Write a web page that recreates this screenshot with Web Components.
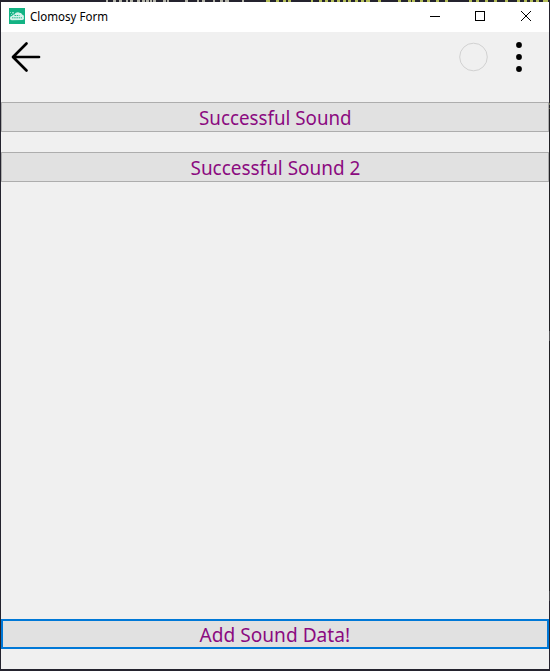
<!DOCTYPE html>
<html lang="en">
<head>
<meta charset="utf-8">
<title>Clomosy Form</title>
<style>
html, body { margin: 0; height: 100%; overflow: hidden; background: #24232e; }
</style>
</head>
<body>
<app-desktop>
  <app-window caption="Clomosy Form">
    <form-toolbar slot="toolbar"></form-toolbar>
    <form-button width="153">Successful Sound</form-button>
    <form-button width="170">Successful Sound 2</form-button>
    <form-button slot="footer" width="151" focused>Add Sound Data!</form-button>
  </app-window>
</app-desktop>
<script>
class Base extends HTMLElement {
  constructor() {
    super();
    this.attachShadow({ mode: 'open' }).innerHTML = this.constructor.html;
  }
}

// Scales its text horizontally to a given width.
customElements.define('fit-text', class extends Base {
  static html = `<style>
    :host { display: flex; justify-content: center; }
    span { display: block; white-space: nowrap; flex: none; transform-origin: var(--origin, center); }
  </style><span><slot></slot></span>`;
  static observedAttributes = ['width'];
  connectedCallback() { this.fit(); }
  attributeChangedCallback() { this.fit(); }
  fit() {
    const s = this.shadowRoot.querySelector('span');
    const w = s.offsetWidth, target = +this.getAttribute('width');
    if (w && target) s.style.transform = `scaleX(${target / w})`;
  }
});

customElements.define('app-desktop', class extends Base {
  static html = `<style>
    :host { display: grid; grid-template: 2px 667px 2px / 1px 548px 1px; width: 550px; height: 671px; background: #24232e; }
    svg { display: block; grid-area: 1 / 1 / 2 / 4; }
    .edge { grid-area: 2 / 3; background: linear-gradient(#25232e 0 101px, #73735b 101px 103px, #2a2931 103px 106px, #66664f 106px 107px, #202024 107px 329px, #555558 329px 339px, #202024 339px 589px, #48484c 589px 599px, #25232e 599px); }
    slot { display: block; grid-area: 2 / 2; }
  </style>
  <svg width="550" height="2" viewBox="0 0 550 2" fill="none" stroke-width="2">
    <path stroke="#b5b5aa" d="M106 1h2M113 1h3M119 1h3M126 1h2M130 1h3M137 1h3M142 1h3M146 1h3M150 1h2M153 1h3M163 1h3M167 1h2M185 1h3M197 1h2M202 1h3M213 1h2M220 1h3"/>
    <path stroke="#b5b5aa" d="M225 1h4M242 1h2"/>
    <path stroke="#b4bd58" d="M266 1h4M276 1h3M283 1h3M288 1h3M311 1h2M319 1h3M325 1h3M331 1h3M337 1h3M343 1h3M348 1h3M355 1h3M361 1h3M366 1h4M378 1h3M398 1h3M408 1h3M412 1h3M420 1h3M427 1h3M436 1h3M445 1h3M469 1h3M476 1h3M485 1h3M494 1h3M505 1h3M517 1h3M524 1h3M530 1h3M536 1h3M543 1h5"/>
  </svg><slot></slot><div class="edge"></div>`;
});

customElements.define('window-controls', class extends Base {
  static html = `<style>
    :host { display: flex; }
    svg { display: block; width: 46px; height: 30px; fill: none; stroke: #000; }
  </style>
  <svg viewBox="0 0 46 30"><path d="M19 14.5h10" shape-rendering="crispEdges"/></svg>
  <svg viewBox="0 0 46 30"><path d="M18.5 9.5h9v9h-9z" shape-rendering="crispEdges"/></svg>
  <svg viewBox="0 0 46 30"><path d="M18 9l10 10M28 9L18 19"/></svg>`;
});

customElements.define('app-logo', class extends Base {
  static html = `<style>:host { display: block; width: 16px; height: 16px; } svg { display: block; }</style>
  <svg width="16" height="16" viewBox="0 0 16 16">
    <path fill="#13b384" d="M0 0h16v16H0z"/>
    <path fill="#d5f4eb" d="M3 12.2C1.4 12.2.7 11 1.1 9.8 1 8.6 2 7.7 3.2 8 3.5 6.7 4.8 6.4 5.5 6.5 6.3 4.3 9.4 3.6 11 5c.9-.1 1.9.5 2 1.4 1.6.3 2.3 1.6 1.8 2.8.6 1.5-.2 2.8-1.6 2.8z"/>
    <path fill="none" stroke="#13b384" stroke-width=".9" stroke-dasharray="1.5 .7" d="M3 9.8h10M5.5 7.5h5"/>
    <path fill="#8bdcc5" d="M1 4h1v1H1zM3 4h2v1.5H3zM2 6h1v1H2z"/>
  </svg>`;
});

customElements.define('app-window', class extends Base {
  static html = `<style>
    :host { display: flex; flex-direction: column; height: 667px; background: #f0f0f0; }
    header { display: flex; height: 30px; background: #fff; padding-left: 8px; align-items: center; box-sizing: border-box; flex: none; }
    app-logo { margin-top: -2px; }
    fit-text { --origin: left; justify-content: flex-start; width: 78px; margin-left: 5px; font: 12px/16px "Noto Sans", sans-serif; color: #000; }
    window-controls { margin-left: auto; }
    main { display: flex; flex-direction: column; gap: 20px; padding-top: 20px; flex: 1; }
    footer { padding-bottom: 20px; }
  </style>
  <header><app-logo></app-logo><fit-text width="78"></fit-text><window-controls></window-controls></header>
  <slot name="toolbar"></slot>
  <main><slot></slot></main>
  <footer><slot name="footer"></slot></footer>`;
  connectedCallback() {
    const t = this.shadowRoot.querySelector('fit-text');
    t.textContent = this.getAttribute('caption');
    t.fit();
  }
});

customElements.define('form-toolbar', class extends Base {
  static html = `<style>
    :host { display: flex; height: 50px; flex: none; justify-content: space-between; }
    svg { display: block; }
  </style>
  <svg width="50" height="50" viewBox="0 0 50 50" fill="none" stroke="#000" stroke-width="2.7" stroke-linecap="round" stroke-linejoin="round"><path d="M38 25H12.5M25.5 11.5L12 25l13.5 13.5"/></svg>
  <svg width="98" height="50" viewBox="0 0 98 50"><circle cx="22.5" cy="25" r="13.8" fill="none" stroke="#d1d1d1"/><g fill="#000"><circle cx="68" cy="13" r="2.9"/><circle cx="68" cy="25" r="2.9"/><circle cx="68" cy="37" r="2.9"/></g></svg>`;
});

customElements.define('form-button', class extends Base {
  static html = `<style>
    :host { display: block; }
    button { display: flex; justify-content: center; align-items: center; width: 100%; height: 30px; padding: 2px 0 0; box-sizing: border-box; background: #e1e1e1; border: 1px solid #adadad; border-radius: 0; font: 19.5px/26px "Noto Sans", sans-serif; color: #8b0a80; }
    :host([focused]) button { border: 2px solid #0078d7; }
  </style><button><fit-text><slot></slot></fit-text></button>`;
  connectedCallback() {
    this.shadowRoot.querySelector('fit-text').setAttribute('width', this.getAttribute('width'));
  }
});
</script>
</body>
</html>
